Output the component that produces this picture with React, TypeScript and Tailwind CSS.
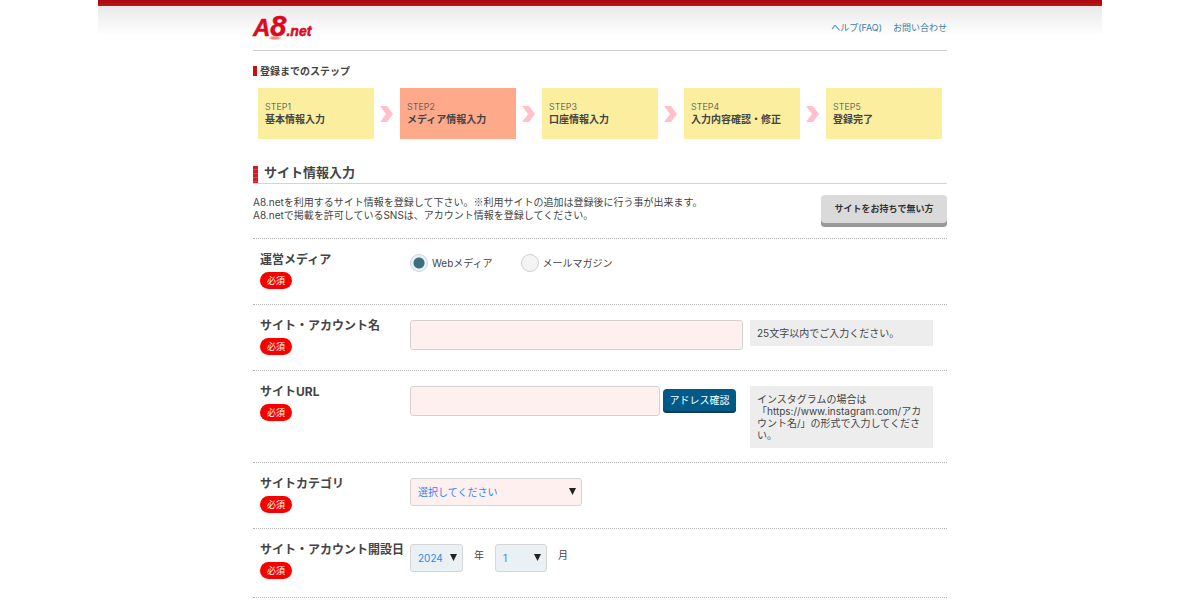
import { useState } from "react";
import clsx from "clsx";

const steps = [
  { no: "STEP1", label: "基本情報入力" },
  { no: "STEP2", label: "メディア情報入力" },
  { no: "STEP3", label: "口座情報入力" },
  { no: "STEP4", label: "入力内容確認・修正" },
  { no: "STEP5", label: "登録完了" },
];

const mediaTypes = [
  { value: "web", label: "Webメディア" },
  { value: "mail", label: "メールマガジン" },
];

const CURRENT_STEP = 1;

function Logo() {
  return (
    <svg className="overflow-visible" width="60" height="30" viewBox="0 0 60 30" role="img" aria-label="A8.net">
      <ellipse cx="22" cy="26" rx="6" ry="2" fill="#f8bdb0" />
      <ellipse cx="22" cy="26" rx="4" ry="1" fill="#ee8676" />
      <text x="0" y="24" fill="#dc0a20" stroke="#dc0a20" strokeWidth="0.5" fontStyle="italic" fontWeight="700" fontFamily="'Liberation Sans', sans-serif">
        <tspan fontSize="24">A</tspan>
        <tspan fontSize="29">8</tspan>
        <tspan fontSize="14">.net</tspan>
      </text>
      <circle cx="58" cy="15" r="0.5" fill="#dc0a20" />
    </svg>
  );
}

function StepArrow() {
  return (
    <svg className="shrink-0" width="26" height="16" viewBox="0 0 26 16" aria-hidden="true">
      <path d="M6 0h7l6 8-6 8H6l6-8z" fill="#ffc0cb" />
    </svg>
  );
}

interface FieldRowProps {
  label: string;
  htmlFor?: string;
  last?: boolean;
  children: React.ReactNode;
}

function FieldRow({ label, htmlFor, last, children }: FieldRowProps) {
  return (
    <div className={clsx("flex border-t border-dotted border-[#b4b4b4]", last && "border-b pb-[3px]")}>
      <div className="w-[157px] shrink-0 pl-[7px] pt-3 pb-[15px]">
        <label htmlFor={htmlFor} id={`${htmlFor}-label`} className="block text-[12px] leading-[18px] font-bold whitespace-nowrap">
          {label}
        </label>
        <span className="mt-[3px] flex h-[17px] w-8 items-center justify-center rounded-full bg-[#f80000] text-[9px] text-white">
          必須
        </span>
      </div>
      <div className="flex flex-1 items-start pt-[15px] pb-[14px]">{children}</div>
    </div>
  );
}

function Note({ children }: { children: React.ReactNode }) {
  return (
    <p className="ml-[7px] mr-[14px] w-[183px] shrink-0 bg-[#ededed] p-[7px] text-[10px] leading-[12px] whitespace-nowrap">
      {children}
    </p>
  );
}

interface SelectProps {
  id: string;
  options: string[];
  className: string;
  ariaLabel?: string;
}

function Select({ id, options, className, ariaLabel }: SelectProps) {
  return (
    <div className="relative">
      <select
        id={id}
        aria-label={ariaLabel}
        className={clsx("block h-7 appearance-none rounded-[3px] border border-[#d6d6d6] pl-[7px] text-[10px] text-[#2f86ee]", className)}
      >
        {options.map((o) => (
          <option key={o}>{o}</option>
        ))}
      </select>
      <svg className="pointer-events-none absolute right-[6px] top-[10px]" width="7" height="7" viewBox="0 0 7 7" aria-hidden="true">
        <path d="M0 0h7L3.5 7z" fill="#222" />
      </svg>
    </div>
  );
}

export default function App() {
  const [media, setMedia] = useState("web");

  return (
    <div className="mx-auto w-full max-w-[1004px] bg-white font-['Inter','Noto_Sans_CJK_JP',sans-serif] text-[#444]">
      <div className="h-[6px] bg-linear-to-b from-[#a5080d] to-[#c01418]" />
      <div className="bg-linear-to-b from-[#e9e9e9] to-white to-[30px]">
        <div className="mx-auto max-w-[694px]">
          <header className="flex h-[45px] items-start justify-between border-b border-[#ccc] pt-[6px]">
            <a href="#top">
              <Logo />
            </a>
            <nav className="flex gap-[11px] pt-[9px] text-[9px] leading-[14px] text-[#3f7ea6]">
              <a href="#help">ヘルプ(FAQ)</a>
              <a href="#contact">お問い合わせ</a>
            </nav>
          </header>

          {/* Steps */}
          <h2 className="mt-[15px] flex h-[10px] items-center border-l-4 border-[#cc0c12] pl-[3px] text-[10px] font-bold">
            登録までのステップ
          </h2>
          <ol className="mt-3 flex px-[5px]">
            {steps.map((step, i) => (
              <li key={step.no} className={clsx("flex items-center", i < steps.length - 1 ? "flex-[142]" : "flex-[116]")}>
                <div className={clsx("h-[51px] flex-1 pl-[7px] pt-[13px] text-[10px] leading-[12px] whitespace-nowrap", i === CURRENT_STEP ? "bg-[#ffa98b]" : "bg-[#fbee9e]")}>
                  <span className="block text-[9px] font-light">{step.no}</span>
                  <span className="block font-bold">{step.label}</span>
                </div>
                {i < steps.length - 1 && <StepArrow />}
              </li>
            ))}
          </ol>

          {/* Section heading */}
          <div className="mt-[26px] flex h-[19px] items-center border-b border-[#d4d4d4]">
            <span className="h-[17px] w-[5px] bg-[repeating-linear-gradient(to_bottom,#cf1c28_0_3px,#dd4650_3px_4px)]" />
            <h1 className="pb-1 pl-[6px] text-[13px] leading-[18px] font-bold">サイト情報入力</h1>
          </div>
          <div className="flex justify-between py-[11px]">
            <p className="text-[10px] leading-[13px] whitespace-nowrap">
              A8.netを利用するサイト情報を登録して下さい。<span className="font-['Noto_Sans_CJK_JP',sans-serif]">※</span>利用サイトの追加は登録後に行う事が出来ます。
              <br />
              A8.netで掲載を許可しているSNSは、アカウント情報を登録してください。
            </p>
            <button className="h-8 w-[126px] shrink-0 rounded-[4px] bg-[#dadada] pb-1 text-[9px] font-bold text-[#333] shadow-[inset_0_-4px_0_#999]">
              サイトをお持ちで無い方
            </button>
          </div>

          <form>
            <FieldRow label="運営メディア" htmlFor="media">
              <div role="radiogroup" aria-labelledby="media-label" className="flex gap-7">
                {mediaTypes.map((m) => (
                  <label key={m.value} className="flex items-center text-[10px] leading-[18px]">
                    <input
                      type="radio"
                      name="media"
                      id={m.value === "web" ? "media" : "media-mail"}
                      value={m.value}
                      checked={media === m.value}
                      onChange={() => setMedia(m.value)}
                      className="mr-1 size-[18px] appearance-none rounded-full border border-[#d0d0d0] bg-[#f4f4f4] checked:border-[#c9d9e2] checked:bg-[radial-gradient(circle,#3b6f80_5px,#e8f1f6_6px)]"
                    />
                    {m.label}
                  </label>
                ))}
              </div>
            </FieldRow>

            <FieldRow label="サイト・アカウント名" htmlFor="site-name">
              <input id="site-name" type="text" className="h-[30px] min-w-0 flex-1 rounded-[3px] border border-[#d6d2d2] bg-[#fff0f0] px-2 text-[10px]" />
              <Note>25文字以内でご入力ください。</Note>
            </FieldRow>

            <FieldRow label="サイトURL" htmlFor="site-url">
              <input id="site-url" type="text" className="h-[30px] min-w-0 flex-1 rounded-[3px] border border-[#d6d2d2] bg-[#fff0f0] px-2 text-[10px]" />
              <button type="button" className="ml-[3px] mr-[7px] mt-[3px] h-6 w-[73px] rounded-[4px] bg-[#005a88] pb-[2px] text-[10px] text-white shadow-[inset_0_-2px_0_#173c52]">
                アドレス確認
              </button>
              <Note>
                インスタグラムの場合は
                <br />
                「https://www.instagram.com/アカ
                <br />
                ウント名/」の形式で入力してくださ
                <br />
                い。
              </Note>
            </FieldRow>

            <FieldRow label="サイトカテゴリ" htmlFor="category">
              <Select id="category" options={["選択してください"]} className="w-[172px] bg-[#fff0f0]" />
            </FieldRow>

            <FieldRow label="サイト・アカウント開設日" htmlFor="year" last>
              <Select id="year" options={["2024", "2023", "2022"]} className="w-[53px] bg-[#e9f1f5]" />
              <span className="mx-[11px] mt-1 text-[10px]">年</span>
              <Select id="month" ariaLabel="月" options={["1", "2", "3", "4", "5", "6", "7", "8", "9", "10", "11", "12"]} className="w-[52px] bg-[#e9f1f5]" />
              <span className="ml-[11px] mt-1 text-[10px]">月</span>
            </FieldRow>
          </form>
        </div>
      </div>
    </div>
  );
}
